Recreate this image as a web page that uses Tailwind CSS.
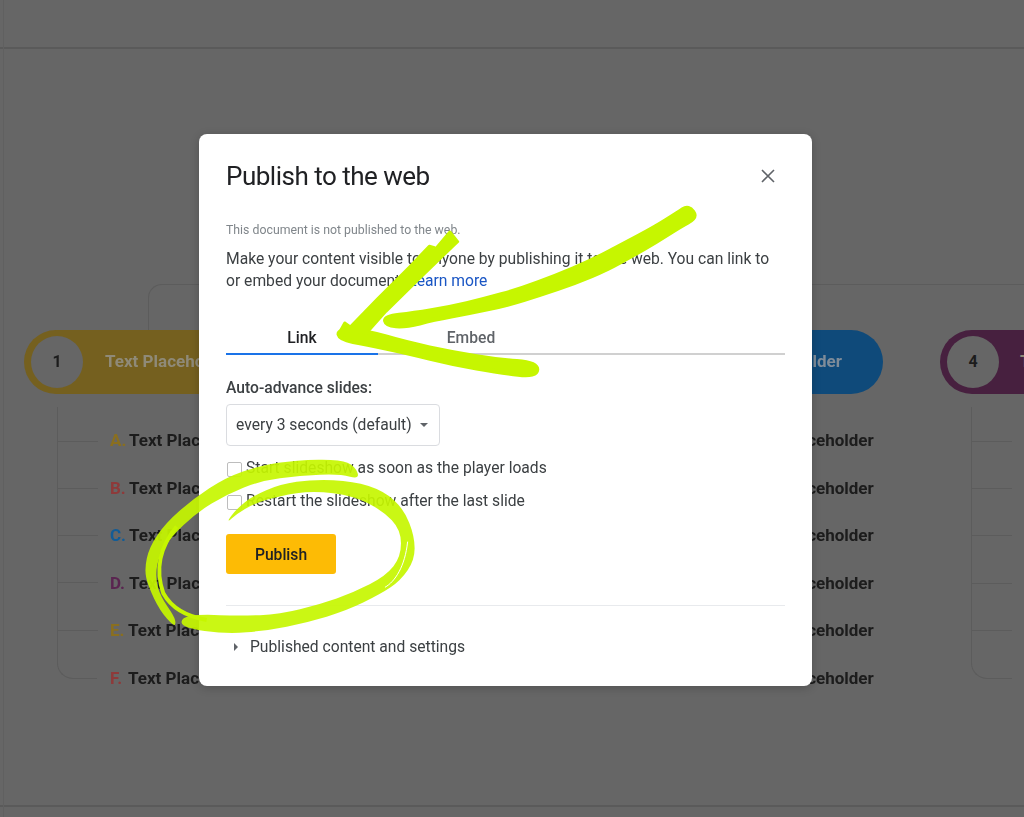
<!DOCTYPE html>
<html lang="en">
<head>
    <meta charset="UTF-8">
    <title>Publish to the web</title>
    <script src="https://cdn.jsdelivr.net/npm/@tailwindcss/browser@4"></script>
</head>
<body class="bg-[#666666] font-['Roboto',sans-serif]">
<div class="relative w-[1024px] h-[817px] overflow-hidden">

    <!-- Dimmed page behind the dialog (free canvas diagram) -->
    <div class="absolute inset-0 blur-[0.4px]">
        <div class="absolute left-0 right-0 top-[47px] h-[2px] bg-[#5a5a5a]"></div>
        <div class="absolute left-0 right-0 top-[805px] h-[2px] bg-[#5a5a5a]"></div>
        <div class="absolute left-[3px] top-0 bottom-0 w-px bg-[#606060]"></div>

        <!-- connector above the pills -->
        <div class="absolute left-[148px] right-0 top-[284px] h-[46px] border-l border-t border-[#5c5c5c] rounded-tl-[14px]"></div>

        <!-- pills -->
        <div class="absolute left-[24px] top-[330px] w-[300px] h-[64px] rounded-full bg-[#75601f] flex items-center pl-[7px]">
            <div class="w-[52px] h-[52px] rounded-full bg-[#666666] flex items-center justify-center text-[16px] font-bold text-[#1c1c1c]">1</div>
            <span class="ml-[22px] text-[17px] font-bold text-[#8f8a78]">Text Placeholder</span>
        </div>
        <div class="absolute left-[600px] top-[330px] w-[283px] h-[64px] rounded-full bg-[#0f4a7a] flex items-center justify-end pr-[41px]">
            <span class="text-[17px] font-bold text-[#7f8c99]">Text Placeholder</span>
        </div>
        <div class="absolute left-[940px] top-[330px] w-[300px] h-[64px] rounded-full bg-[#47203f] flex items-center pl-[7px]">
            <div class="w-[52px] h-[52px] rounded-full bg-[#666666] flex items-center justify-center text-[16px] font-bold text-[#1c1c1c]">4</div>
            <span class="ml-[21px] text-[17px] font-bold text-[#8f8a78]">Text Placeholder</span>
        </div>

        <!-- left tree -->
        <div class="absolute left-[57px] top-[407px] w-[40px] h-[272px] border-l border-b border-[#5c5c5c] rounded-bl-[16px]"></div>
        <div class="absolute left-[57px] top-[441px] w-[41px] h-px bg-[#5c5c5c]"></div>
        <div class="absolute left-[57px] top-[488px] w-[41px] h-px bg-[#5c5c5c]"></div>
        <div class="absolute left-[57px] top-[535px] w-[41px] h-px bg-[#5c5c5c]"></div>
        <div class="absolute left-[57px] top-[582px] w-[41px] h-px bg-[#5c5c5c]"></div>
        <div class="absolute left-[57px] top-[630px] w-[41px] h-px bg-[#5c5c5c]"></div>
        <div class="absolute left-[110px] top-[428px] flex flex-col gap-[23.6px] text-[17px] leading-[24px] font-bold text-[#1c1c1c] whitespace-nowrap">
            <div><span class="inline-block w-[19px] text-[#8a6f1f]">A.</span>Text Placeholder</div>
            <div><span class="inline-block w-[19px] text-[#8e3a3a]">B.</span>Text Placeholder</div>
            <div><span class="inline-block w-[19px] text-[#125c96]">C.</span>Text Placeholder</div>
            <div><span class="inline-block w-[19px] text-[#5a2550]">D.</span>Text Placeholder</div>
            <div><span class="inline-block w-[18px] text-[#8a6f1f]">E.</span>Text Placeholder</div>
            <div><span class="inline-block w-[18px] text-[#8e3a3a]">F.</span>Text Placeholder</div>
        </div>

        <!-- third column text -->
        <div class="absolute left-[745px] top-[428px] flex flex-col gap-[23.6px] text-[17px] leading-[24px] font-bold text-[#1c1c1c] whitespace-nowrap">
            <div>Text Placeholder</div>
            <div>Text Placeholder</div>
            <div>Text Placeholder</div>
            <div>Text Placeholder</div>
            <div>Text Placeholder</div>
            <div>Text Placeholder</div>
        </div>

        <!-- right tree -->
        <div class="absolute left-[971px] top-[407px] w-[41px] h-[272px] border-l border-b border-[#5c5c5c] rounded-bl-[16px]"></div>
        <div class="absolute left-[971px] top-[441px] w-[41px] h-px bg-[#5c5c5c]"></div>
        <div class="absolute left-[971px] top-[488px] w-[41px] h-px bg-[#5c5c5c]"></div>
        <div class="absolute left-[971px] top-[535px] w-[41px] h-px bg-[#5c5c5c]"></div>
        <div class="absolute left-[971px] top-[583px] w-[41px] h-px bg-[#5c5c5c]"></div>
        <div class="absolute left-[971px] top-[630px] w-[41px] h-px bg-[#5c5c5c]"></div>
    </div>

    <!-- Dialog -->
    <div class="absolute inset-0 pl-[199px] pt-[134px]">
        <div class="w-[613px] h-[552px] bg-white rounded-[8px] px-[27px] text-[15.65px] shadow-[0_2px_10px_rgba(0,0,0,0.2)]">
            <div class="flex items-center justify-between pt-[24px] h-[60px]">
                <h1 class="text-[26px] tracking-[-0.5px] leading-[36px] text-[#202124]">Publish to the web</h1>
                <svg class="w-[16px] h-[16px] mr-[9px] text-[#5f6368]" viewBox="0 0 16 16" fill="none" stroke="currentColor" stroke-width="1.6">
                    <path d="M2 2l12 12M14 2L2 14"/>
                </svg>
            </div>
            <p class="mt-[28px] text-[12.3px] leading-[16px] text-[#80868b]">This document is not published to the web.</p>
            <p class="mt-[10px] leading-[22px] text-[#3c4043]">Make your content visible to anyone by publishing it to the web. You can link to or embed your document. <span class="text-[#1a56c4]">Learn more</span></p>

            <div class="mt-[21px] flex h-[42px] border-b-2 border-[#d0d0d0] font-medium">
                <div class="w-[152px] h-[42px] pt-[10px] flex items-center justify-center border-b-2 border-[#1a73e8] text-[#202124]">Link</div>
                <div class="w-[186px] pt-[10px] flex items-center justify-center text-[#5f6368]">Embed</div>
            </div>

            <div class="mt-[22px] leading-[22px] font-medium text-[#3c4043]">Auto-advance slides:</div>
            <div class="mt-[5px] w-[214px] h-[42px] border border-[#dadce0] rounded-[4px] flex items-center justify-between pl-[9px] pr-[11px] text-[#3c4043]">
                <span>every 3 seconds (default)</span>
                <span class="w-0 h-0 border-x-[4px] border-x-transparent border-t-[4px] border-t-[#5f6368]"></span>
            </div>

            <div class="mt-[11px] flex items-center gap-[4px] h-[22px] text-[#3c4043]">
                <span class="mt-[3px] ml-[1px] w-[15px] h-[15px] border border-[#bdbdbd] rounded-[2px]"></span>
                <span>Start slideshow as soon as the player loads</span>
            </div>
            <div class="mt-[11px] flex items-center gap-[4px] h-[22px] text-[#3c4043]">
                <span class="mt-[3px] ml-[1px] w-[15px] h-[15px] border border-[#bdbdbd] rounded-[2px]"></span>
                <span>Restart the slideshow after the last slide</span>
            </div>

            <button class="mt-[22px] block w-[110px] h-[40px] pt-px rounded-[3px] bg-[#fdbb05] font-medium text-[#202124]">Publish</button>

            <div class="mt-[31px] border-t border-[#e8eaed]"></div>

            <div class="mt-[30px] flex items-center h-[22px] text-[#3c4043]">
                <span class="ml-[8px] w-0 h-0 border-y-[4px] border-y-transparent border-l-[4px] border-l-[#5f6368]"></span>
                <span class="ml-[12px]">Published content and settings</span>
            </div>
        </div>
    </div>

    <!-- Highlighter scribbles on top of the screenshot -->
    <svg class="absolute inset-0 pointer-events-none" width="1024" height="817" viewBox="0 0 1024 817" fill="#c6f600" stroke="#c6f600" stroke-linejoin="round">
        <!-- arrow -->
        <g transform="translate(200 130) scale(0.3954 0.3333)" stroke-width="14">
            <path data-pts="1235,228 1256,262 1210,292 1150,338 1090,378 1030,418 950,458 860,494 780,524 680,549 590,569 520,590 472,586 468,560 540,551 630,533 720,508 810,478 900,438 990,393 1070,343 1150,293 1210,248"/>
            <path stroke-width="7" d="M632 305L652 335L560 440L470 545L425 605L370 630L352 608L366 578L380 590L450 505L530 410L580 348L593 352L570 395L600 350Z"/>
            <path data-pts="350,600 420,603 520,638 640,668 750,690 852,698 850,740 760,727 640,702 520,667 420,642 355,628"/>
        </g>
        <!-- circle -->
        <g transform="translate(140 370) scale(0.3333)" stroke-width="5">
            <path fill-opacity="0.92" stroke="none" data-pts="100,768 60,722 25,650 13,600 28,530 78,458 158,388 258,322 360,287 470,270 600,268 645,288 660,328 600,312 480,317 360,333 260,373 170,428 90,503 52,570 47,630 62,680 102,738 108,762"/>
            <path fill-opacity="0.92" stroke="none" data-pts="258,460 288,418 338,378 420,343 520,328 640,333 732,363 792,418 824,500 824,570 782,632 722,672 620,722 500,758 380,782 260,792 128,774 122,743 180,733 300,738 420,733 540,703 640,668 738,618 783,560 783,480 728,422 640,377 520,362 420,377 340,402 290,432"/>
            <path fill="none" stroke-width="12" d="M110 470C60 530 45 600 70 670C95 715 140 740 200 750"/>
            <path fill="none" stroke="#ffffff" stroke-width="3" d="M735 652C765 635 795 590 803 515"/>
        </g>
    </svg>
</div>

<script>
    // Turn the traced brush outlines into smooth closed curves
    document.querySelectorAll('path[data-pts]').forEach((path) => {
        const pts = path.dataset.pts.split(' ').map((p) => p.split(',').map(Number));
        const mid = (a, b) => [(a[0] + b[0]) / 2, (a[1] + b[1]) / 2];
        let d = `M${mid(pts[pts.length - 1], pts[0]).join(' ')}`;
        pts.forEach((p, i) => {
            d += `Q${p.join(' ')} ${mid(p, pts[(i + 1) % pts.length]).join(' ')}`;
        });
        path.setAttribute('d', d + 'Z');
    });
</script>
</body>
</html>
